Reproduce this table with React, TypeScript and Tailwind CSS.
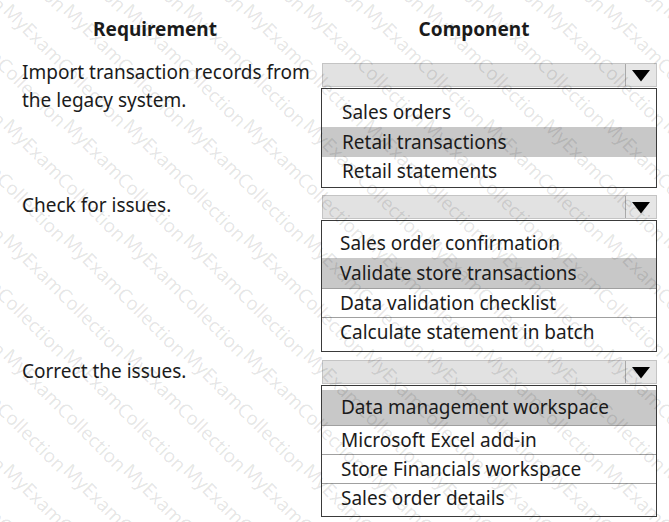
import React from "react";

type Item = { label: string; h: number; hl?: boolean; line?: boolean };

function Select({
  items,
  pt,
  pb,
  px,
}: {
  items: Item[];
  pt: number;
  pb: number;
  px: number;
}) {
  return (
    <div className="w-[336px]">
      <div className="flex h-[24px] border border-[#c4c4c4] bg-[#e2e2e2] ml-[1px]">
        <div className="flex-1" />
        <div className="w-[31px] border-l border-[#a9a9a9] bg-[#e6e6e6] flex items-center justify-center">
          <svg width="20" height="13" viewBox="0 0 20 13">
            <polygon points="1,1 19,1 10,12.5" fill="#000" />
          </svg>
        </div>
      </div>
      <div
        className="mt-[1px] border-[1.5px] border-[#3a3a3a] bg-white"
        style={{ paddingTop: pt, paddingBottom: pb }}
      >
        {items.map((it, i) => (
          <div
            key={i}
            className={
              "flex items-center " +
              (it.hl ? "bg-[#c8c8c8] " : "") +
              (it.line ? "border-t border-[#a0a0a0] " : "")
            }
            style={{ height: it.h, paddingLeft: px }}
          >
            {it.label}
          </div>
        ))}
      </div>
    </div>
  );
}

function Watermark() {
  const marks: { x: number; y: number }[] = [];
  for (let j = -1; j <= 4; j++) {
    for (let i = -2; i <= 11; i++) {
      marks.push({ x: 2 + 60 * i, y: 115 * j });
    }
  }
  return (
    <div className="pointer-events-none absolute inset-0 overflow-hidden">
      {marks.map((m, k) => (
        <div
          key={k}
          className="absolute whitespace-nowrap text-[19px] leading-[20px] text-black/[0.11] origin-top-left rotate-45"
          style={{ left: m.x + 12, top: m.y }}
        >
          MyExamCollection
        </div>
      ))}
    </div>
  );
}

export default function App() {
  return (
    <div
      className="relative w-[669px] h-[522px] bg-white text-[#1b1b1b] overflow-hidden"
      style={{ fontFamily: '"Noto Sans", "Open Sans", sans-serif' }}
    >
      <div className="flex h-[63px] pt-[16px] text-[19px] font-bold leading-[26px]">
        <div className="w-[310px] text-center">Requirement</div>
        <div className="w-[328px] text-center">Component</div>
      </div>

      <div className="flex text-[19px]">
        <div className="w-[321px] pl-[22px] leading-[28px] -mt-[5px]">
          Import transaction records from
          <br />
          the legacy system.
        </div>
        <Select
          pt={8}
          pb={1}
          px={20}
          items={[
            { label: "Sales orders", h: 30 },
            { label: "Retail transactions", h: 30, hl: true },
            { label: "Retail statements", h: 29 },
          ]}
        />
      </div>

      <div className="flex text-[19px] mt-[7px]">
        <div className="w-[321px] pl-[22px] leading-[28px] -mt-[4px]">
          Check for issues.
        </div>
        <Select
          pt={8}
          pb={5}
          px={18}
          items={[
            { label: "Sales order confirmation", h: 29 },
            { label: "Validate store transactions", h: 30, hl: true },
            { label: "Data validation checklist", h: 29, line: true },
            { label: "Calculate statement in batch", h: 29, line: true },
          ]}
        />
      </div>

      <div className="flex text-[19px] mt-[8px]">
        <div className="w-[321px] pl-[22px] leading-[28px] -mt-[3px]">
          Correct the issues.
        </div>
        <Select
          pt={4}
          pb={4}
          px={19}
          items={[
            { label: "Data management workspace", h: 35, hl: true },
            { label: "Microsoft Excel add-in", h: 29, line: true },
            { label: "Store Financials workspace", h: 29, line: true },
            { label: "Sales order details", h: 29, line: true },
          ]}
        />
      </div>

      <Watermark />
    </div>
  );
}
